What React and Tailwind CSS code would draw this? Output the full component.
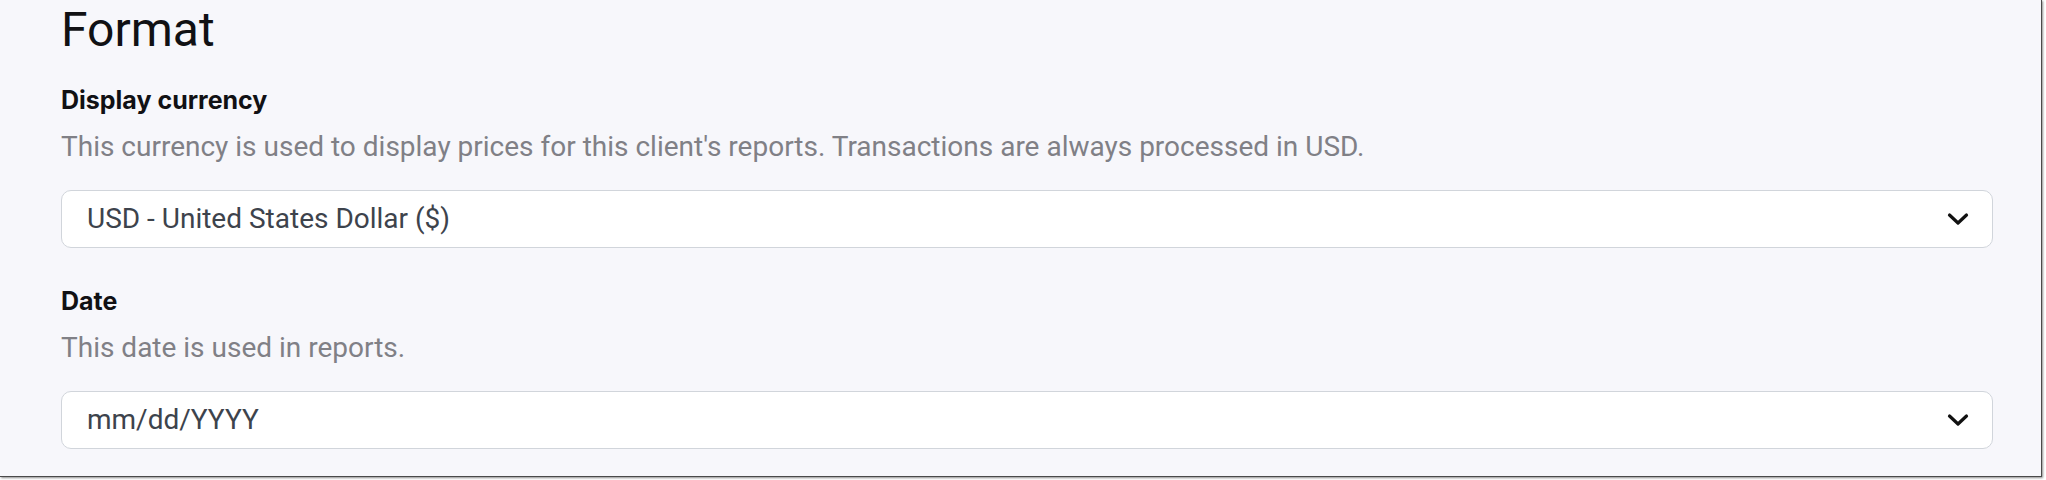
import React from 'react';

const fields = [
  {
    id: 'currency',
    label: 'Display currency',
    help: "This currency is used to display prices for this client's reports. Transactions are always processed in USD.",
    value: 'USD - United States Dollar ($)',
  },
  {
    id: 'date',
    label: 'Date',
    help: 'This date is used in reports.',
    value: 'mm/dd/YYYY',
  },
];

function Chevron() {
  return (
    <svg width="22" height="14" viewBox="0 0 22 14" fill="none" className="shrink-0">
      <path d="M2.5 3 L11 11 L19.5 3" stroke="#111" strokeWidth="3.2" strokeLinecap="round" strokeLinejoin="round" />
    </svg>
  );
}

function SelectField({ field, first }) {
  return (
    <div className={first ? 'mt-[24px]' : 'mt-[37px]'}>
      <div className="font-['Inter',sans-serif] text-[25px] leading-[32px] font-bold text-[#111114]">{field.label}</div>
      <p className="mt-[13px] text-[28px] leading-[36px] text-[#808086]">{field.help}</p>
      <div className="mt-[25px] h-[58px] w-full flex items-center justify-between rounded-[10px] border border-[#d1d5db] bg-white pl-[25px] pr-[23px]">
        <span className="text-[28px] leading-[36px] text-[#3d434c]">{field.value}</span>
        <Chevron />
      </div>
    </div>
  );
}

export default function App() {
  return (
    <div className="w-[2046px] h-[480px] bg-white overflow-hidden" style={{ fontFamily: 'Roboto, "Noto Sans", sans-serif' }}>
      <div className="w-[2042px] h-[477px] bg-[#f7f7fb] border-r border-b border-[#4a4a4a] shadow-[1px_1px_2px_rgba(0,0,0,0.45)] pl-[61px] pr-[48px]">
        <h1 className="text-[48px] leading-[60px] font-normal text-[#111114]">Format</h1>
        {fields.map((f, i) => (
          <SelectField key={f.id} field={f} first={i === 0} />
        ))}
      </div>
    </div>
  );
}
